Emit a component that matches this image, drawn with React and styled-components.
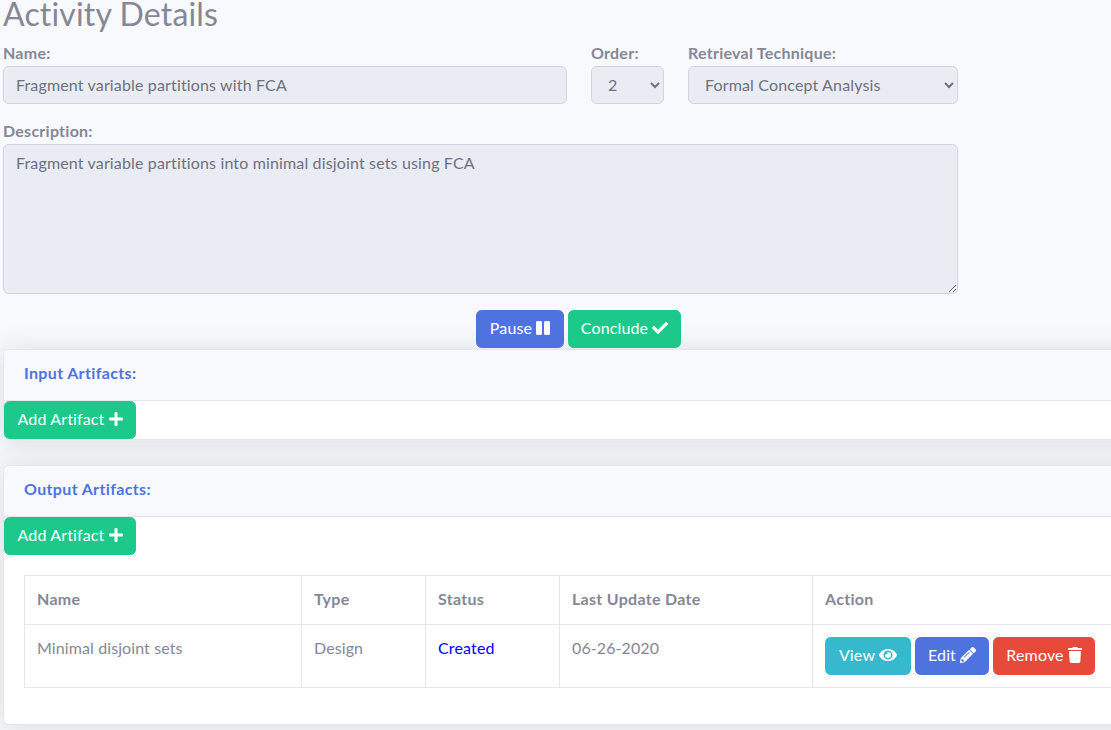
import React from 'react'
import styled, { createGlobalStyle } from 'styled-components'
import { FaPause, FaCheck, FaPlus, FaEye, FaPencilAlt, FaTrash } from 'react-icons/fa'

const GlobalStyle = createGlobalStyle`
    html, body {
        margin: 0;
        height: 730px;
        overflow: hidden;
        background: #f8f9fc;
    }
    * {
        box-sizing: border-box;
    }
`

const artifacts = [
    { name: 'Minimal disjoint sets', type: 'Design', status: 'Created', date: '06-26-2020' },
]

const ArtifactButton = () => (
    <Button $color="#1cc88a" $width={132}>Add Artifact <PlusIcon /></Button>
)

const App = () => {
    return (
        <Page>
            <GlobalStyle />
            <Title>Activity Details</Title>
            <FormGrid>
                <Field>
                    <Label>Name:</Label>
                    <Input readOnly value="Fragment variable partitions with FCA" />
                </Field>
                <Field>
                    <Label>Order:</Label>
                    <Select disabled defaultValue="2">
                        <option value="1">1</option>
                        <option value="2">2</option>
                    </Select>
                </Field>
                <Field>
                    <Label>Retrieval Technique:</Label>
                    <Select disabled defaultValue="fca">
                        <option value="fca">Formal Concept Analysis</option>
                    </Select>
                </Field>
                <WideField>
                    <Label>Description:</Label>
                    <TextArea readOnly value="Fragment variable partitions into minimal disjoint sets using FCA" />
                </WideField>
            </FormGrid>
            <Actions>
                <Button $color="#4e73df" $width={88}>Pause <PauseIcon /></Button>
                <Button $color="#1cc88a" $width={113}>Conclude <CheckIcon /></Button>
            </Actions>
            <Card>
                <CardHeader>Input Artifacts:</CardHeader>
                <ArtifactButton />
            </Card>
            <Card>
                <CardHeader>Output Artifacts:</CardHeader>
                <ArtifactButton />
                <TableWrap>
                    <Table>
                        <thead>
                            <tr>
                                <Th $width={277}>Name</Th>
                                <Th $width={124}>Type</Th>
                                <Th $width={134}>Status</Th>
                                <Th $width={253}>Last Update Date</Th>
                                <Th $width={320}>Action</Th>
                            </tr>
                        </thead>
                        <tbody>
                            {artifacts.map((artifact) => (
                                <tr key={artifact.name}>
                                    <Td>{artifact.name}</Td>
                                    <Td>{artifact.type}</Td>
                                    <Td><Status>{artifact.status}</Status></Td>
                                    <Td>{artifact.date}</Td>
                                    <Td>
                                        <RowActions>
                                            <Button $color="#36b9cc" $width={86}>View <EyeIcon /></Button>
                                            <Button $color="#4e73df" $width={74}>Edit <PencilIcon /></Button>
                                            <Button $color="#e74a3b" $width={102}>Remove <TrashIcon /></Button>
                                        </RowActions>
                                    </Td>
                                </tr>
                            ))}
                        </tbody>
                    </Table>
                </TableWrap>
            </Card>
        </Page>
    )
}

export default App

const Page = styled.div`
    width: 1111px;
    height: 730px;
    overflow: hidden;
    padding-left: 3px;
    font-family: Lato, "Open Sans", sans-serif;
    font-size: 16px;
    line-height: 24px;
    letter-spacing: 0.15px;
    color: #858796;
    background: #f8f9fc;
`

const Title = styled.h2`
    margin: -5px 0 9px;
    height: 38px;
    font-size: 32px;
    line-height: 38px;
    font-weight: 400;
`

const FormGrid = styled.div`
    display: grid;
    grid-template-columns: 564px 73px 270px;
    column-gap: 24px;
    row-gap: 16px;
    width: 955px;
`

const Field = styled.div`
    display: flex;
    flex-direction: column;
`

const WideField = styled(Field)`
    grid-column: 1 / -1;
`

const Label = styled.label`
    height: 24px;
    font-size: 16px;
    font-weight: 700;
    line-height: 22px;
    letter-spacing: 0.25px;
`

const controlStyles = `
    width: 100%;
    font-family: inherit;
    font-size: 16px;
    letter-spacing: 0.15px;
    color: #6e707e;
    background-color: #eaecf4;
    border: 1px solid #d1d3e2;
    border-radius: 5.6px;
    opacity: 1;
    outline: none;
`

const Input = styled.input`
    ${controlStyles}
    height: 38px;
    padding: 5px 12px 7px;
`

const Select = styled.select`
    ${controlStyles}
    height: 38px;
    padding: 5px 12px 7px;
`

const TextArea = styled.textarea`
    ${controlStyles}
    display: block;
    height: 150px;
    padding: 6px 12px;
    line-height: 24px;
    resize: vertical;
`

const Actions = styled.div`
    display: flex;
    justify-content: center;
    gap: 4px;
    width: 1151px;
    margin-top: 16px;
    height: 39px;
`

const Button = styled.button`
    display: inline-flex;
    align-items: center;
    justify-content: center;
    gap: 4px;
    width: ${props => props.$width}px;
    height: 38px;
    padding: 0 0 3px;
    font-family: inherit;
    font-size: 16px;
    letter-spacing: 0.15px;
    color: #fff;
    white-space: nowrap;
    background-color: ${props => props.$color};
    border: 1px solid ${props => props.$color};
    border-radius: 5.6px;
`

const PlusIcon = styled(FaPlus)`
    flex: none;
    width: 14px;
    height: 16px;
`

const PauseIcon = styled(FaPause)`
    flex: none;
    width: 14px;
    height: 16px;
`

const TrashIcon = styled(FaTrash)`
    flex: none;
    width: 14px;
    height: 16px;
`

const CheckIcon = styled(FaCheck)`
    flex: none;
    width: 16px;
    height: 16px;
`

const PencilIcon = styled(FaPencilAlt)`
    flex: none;
    width: 16px;
    height: 16px;
`

const EyeIcon = styled(FaEye)`
    flex: none;
    width: 18px;
    height: 16px;
`

const Card = styled.section`
    width: 1180px;
    margin: 0 0 25px;
    background: #fff;
    border: 1px solid #e3e6f0;
    border-radius: 5.6px;
    box-shadow: 0 2.4px 28px 0 rgba(58, 59, 69, 0.15);
    & > button {
        display: flex;
    }
`

const CardHeader = styled.h6`
    margin: 0;
    height: 51px;
    padding: 11px 20px 13px;
    font-size: 16px;
    line-height: 24px;
    font-weight: 700;
    letter-spacing: 0.35px;
    color: #4e73df;
    background: #f8f9fc;
    border-bottom: 1px solid #e3e6f0;
    border-radius: 5.6px 5.6px 0 0;
`

const TableWrap = styled.div`
    padding: 20px 20px 36px;
`

const Table = styled.table`
    border-collapse: collapse;
    table-layout: fixed;
    width: 1108px;
`

const Th = styled.th`
    width: ${props => props.$width}px;
    height: 49px;
    padding: 11px 12px 13px;
    text-align: left;
    font-weight: 700;
    letter-spacing: 0.3px;
    border: 1px solid #e3e6f0;
`

const Td = styled.td`
    height: 63px;
    padding: 11px 12px 12px;
    vertical-align: top;
    letter-spacing: 0.1px;
    border: 1px solid #e3e6f0;
`

const Status = styled.span`
    color: #0000ff;
    letter-spacing: 0.15px;
`

const RowActions = styled.div`
    display: flex;
    gap: 4px;
    margin-top: 1px;
`
